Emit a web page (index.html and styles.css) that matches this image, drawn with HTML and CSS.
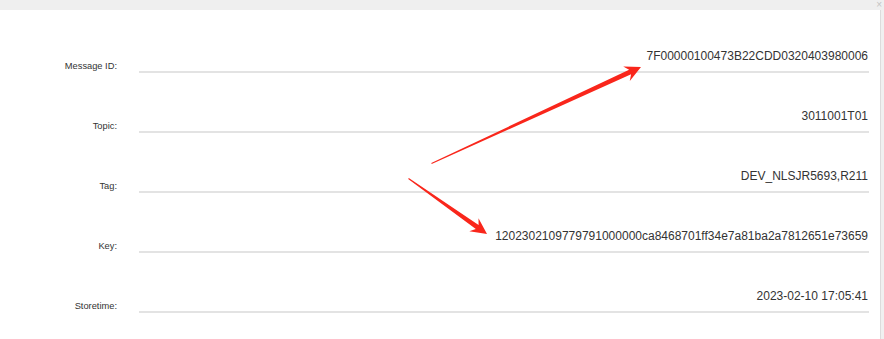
FILE: index.html
```html
<!DOCTYPE html>
<html lang="en">
  <head>
    <meta charset="UTF-8" />
    <meta name="viewport" content="width=device-width,initial-scale=1.0" />
    <title>Message Detail</title>
    <link rel="stylesheet" href="styles.css">
  </head>
  <body>
    <div class="topbar"><span class="close">&times;</span></div>
    <div class="panel">
      <div class="row">
        <label class="label">Message ID:</label>
        <div class="field">7F00000100473B22CDD0320403980006</div>
      </div>
      <div class="row">
        <label class="label">Topic:</label>
        <div class="field">3011001T01</div>
      </div>
      <div class="row">
        <label class="label">Tag:</label>
        <div class="field">DEV_NLSJR5693,R211</div>
      </div>
      <div class="row">
        <label class="label">Key:</label>
        <div class="field">1202302109779791000000ca8468701ff34e7a81ba2a7812651e73659</div>
      </div>
      <div class="row">
        <label class="label">Storetime:</label>
        <div class="field">2023-02-10 17:05:41</div>
      </div>
      <svg class="arrows" width="881" height="329" viewBox="0 10 881 329">
        <polygon points="431.7,164 631.1,74.3 629.8,81 641,67 623.2,66.4 629.1,69.7 431.3,163" />
        <polygon points="408.2,178.9 475.8,229.1 469.3,231.3 487,234 478.5,218.3 478.6,225.1 408.8,178.1" />
      </svg>
    </div>
  </body>
</html>
```

FILE: styles.css
```css
body {
  margin: 0;
  font-family: "Liberation Sans", Arial, sans-serif;
  background-color: #f0f0f0;
  color: #333;
}
.topbar {
  display: flex;
  justify-content: flex-end;
  height: 10px;
  background-color: #efefef;
}
.close {
  padding-right: 2px;
  font-size: 10px;
  line-height: 10px;
  color: #c4c4c4;
}
.panel {
  position: relative;
  width: 881px;
  height: 329px;
  padding: 3px 11px 0 0;
  box-sizing: border-box;
  background-color: #fff;
  border-right: 1px solid #dcdcdc;
}
.row {
  display: grid;
  grid-template-columns: 139px 1fr;
  height: 60px;
}
.label {
  align-self: end;
  text-align: right;
  padding-right: 22px;
  padding-bottom: 1px;
  font-size: 9.3px;
  line-height: 12px;
}
.field {
  align-self: end;
  text-align: right;
  font-size: 12px;
  line-height: 14px;
  padding: 0 1px 8px 0;
  border-bottom: 2px solid #e3e3e3;
}
.arrows {
  position: absolute;
  left: 0;
  top: 0;
  pointer-events: none;
}
.arrows polygon {
  fill: #f9261b;
}
```
